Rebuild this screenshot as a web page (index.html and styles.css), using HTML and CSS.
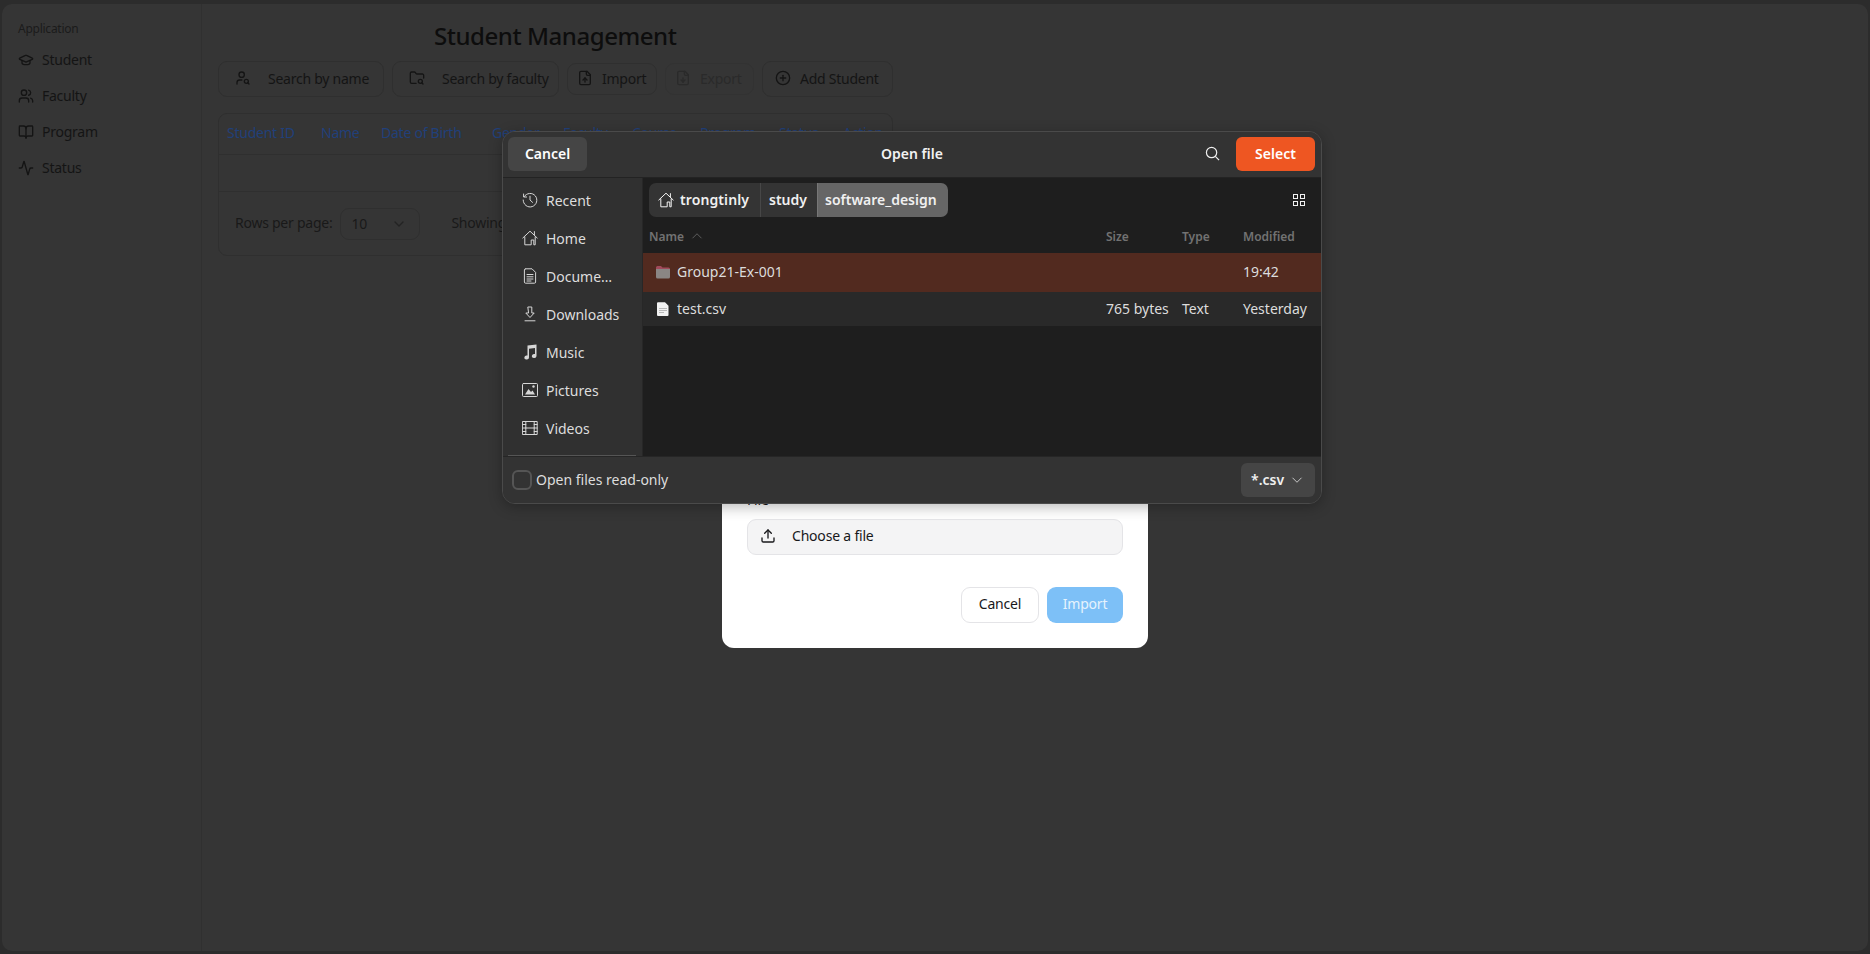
FILE: index.html
```html
<!DOCTYPE html>
<html lang="en">
<head>
<meta charset="utf-8">
<title>Student Management</title>
<link rel="stylesheet" href="styles.css">
</head>
<body>
<svg class="defs" aria-hidden="true">
  <symbol id="i-cap" viewBox="0 0 24 24"><path d="M21.42 10.922a1 1 0 0 0-.019-1.838L12.83 5.18a2 2 0 0 0-1.66 0L2.6 9.08a1 1 0 0 0 0 1.832l8.57 3.908a2 2 0 0 0 1.66 0z"/><path d="M6 12.5V16a6 3 0 0 0 12 0v-3.5"/></symbol>
  <symbol id="i-users" viewBox="0 0 24 24"><path d="M16 21v-2a4 4 0 0 0-4-4H6a4 4 0 0 0-4 4v2"/><circle cx="9" cy="7" r="4"/><path d="M22 21v-2a4 4 0 0 0-3-3.87"/><path d="M16 3.13a4 4 0 0 1 0 7.75"/></symbol>
  <symbol id="i-book" viewBox="0 0 24 24"><path d="M12 7v14"/><path d="M3 18a1 1 0 0 1-1-1V4a1 1 0 0 1 1-1h5a4 4 0 0 1 4 4 4 4 0 0 1 4-4h5a1 1 0 0 1 1 1v13a1 1 0 0 1-1 1h-6a3 3 0 0 0-3 3 3 3 0 0 0-3-3z"/></symbol>
  <symbol id="i-activity" viewBox="0 0 24 24"><path d="M22 12h-2.48a2 2 0 0 0-1.93 1.46l-2.35 8.36a.25.25 0 0 1-.48 0L9.24 2.18a.25.25 0 0 0-.48 0l-2.35 8.36A2 2 0 0 1 4.49 12H2"/></symbol>
  <symbol id="i-usearch" viewBox="0 0 24 24"><circle cx="10" cy="7" r="4"/><path d="M10.3 15H7a4 4 0 0 0-4 4v2"/><circle cx="17" cy="17" r="3"/><path d="m21 21-1.9-1.9"/></symbol>
  <symbol id="i-fsearch" viewBox="0 0 24 24"><circle cx="17" cy="17" r="3"/><path d="M10.7 20H4a2 2 0 0 1-2-2V5a2 2 0 0 1 2-2h3.9a2 2 0 0 1 1.69.9l.81 1.2a2 2 0 0 0 1.67.9H20a2 2 0 0 1 2 2v4.1"/><path d="m21 21-1.5-1.5"/></symbol>
  <symbol id="i-fileup" viewBox="0 0 24 24"><path d="M15 2H6a2 2 0 0 0-2 2v16a2 2 0 0 0 2 2h12a2 2 0 0 0 2-2V7Z"/><path d="M14 2v4a2 2 0 0 0 2 2h4"/><path d="M12 12v6"/><path d="m15 15-3-3-3 3"/></symbol>
  <symbol id="i-filedown" viewBox="0 0 24 24"><path d="M15 2H6a2 2 0 0 0-2 2v16a2 2 0 0 0 2 2h12a2 2 0 0 0 2-2V7Z"/><path d="M14 2v4a2 2 0 0 0 2 2h4"/><path d="M12 18v-6"/><path d="m9 15 3 3 3-3"/></symbol>
  <symbol id="i-plus" viewBox="0 0 24 24"><circle cx="12" cy="12" r="10"/><path d="M8 12h8"/><path d="M12 8v8"/></symbol>
  <symbol id="i-upload" viewBox="0 0 24 24"><path d="M21 15v4a2 2 0 0 1-2 2H5a2 2 0 0 1-2-2v-4"/><path d="m17 8-5-5-5 5"/><path d="M12 3v12"/></symbol>
  <symbol id="i-chev" viewBox="0 0 24 24"><path d="m6 9 6 6 6-6"/></symbol>
  <symbol id="g-recent" viewBox="0 0 16 16"><path d="M2.2 4.6A6.8 6.8 0 1 1 1.2 8"/><path d="M1.6 2v3h3"/><path d="M8 4.2V8l2.6 2.4"/></symbol>
  <symbol id="g-home" viewBox="0 0 16 16"><path d="M.8 8 8 1.2 15.2 8"/><path d="M2.8 7v7.8h6.400V10h2.600v4.800h1.400V7"/><path d="M12.400 1.600v3"/></symbol>
  <symbol id="g-doc" viewBox="0 0 16 16"><path d="M4 .8h6L13.600 4.400v9.600a1.200 1.200 0 0 1-1.200 1.200H3.600a1.200 1.200 0 0 1-1.200-1.200V2A1.200 1.200 0 0 1 3.600.8z"/><path d="M5 6.500h6M5 8.800h6M5 11h6M5 13h4"/></symbol>
  <symbol id="g-down" viewBox="0 0 16 16"><path d="M6.200 1h3.600v6h2.400L8 11.500 3.800 7h2.400z"/><path d="M3 14.800h10"/></symbol>
  <symbol id="g-grid" viewBox="0 0 16 16"><rect x="2.500" y="2.500" width="4" height="4"/><rect x="9.500" y="2.500" width="4" height="4"/><rect x="2.500" y="9.500" width="4" height="4"/><rect x="9.500" y="9.500" width="4" height="4"/></symbol>
</svg>

<div class="desktop">
  <div class="app">
    <aside class="side">
      <div class="side-label">Application</div>
      <nav class="side-nav">
        <a class="side-item"><svg class="ic"><use href="#i-cap"/></svg><span>Student</span></a>
        <a class="side-item"><svg class="ic"><use href="#i-users"/></svg><span>Faculty</span></a>
        <a class="side-item"><svg class="ic"><use href="#i-book"/></svg><span>Program</span></a>
        <a class="side-item"><svg class="ic"><use href="#i-activity"/></svg><span>Status</span></a>
      </nav>
    </aside>
    <main class="main">
      <h1 class="title">Student Management</h1>
      <div class="toolbar">
        <div class="search sname"><svg class="ic"><use href="#i-usearch"/></svg>Search by name</div>
        <div class="search sfac"><svg class="ic"><use href="#i-fsearch"/></svg>Search by faculty</div>
        <div class="tbtn bimp"><svg class="ic"><use href="#i-fileup"/></svg>Import</div>
        <div class="tbtn bexp"><svg class="ic"><use href="#i-filedown"/></svg>Export</div>
        <div class="tbtn badd"><svg class="ic"><use href="#i-plus"/></svg>Add Student</div>
      </div>
      <section class="table-card">
        <div class="thead">
          <span>Student ID</span><span>Name</span><span>Date of Birth</span><span>Gender</span><span>Faculty</span><span>Course</span><span>Program</span><span>Status</span><span>Action</span>
        </div>
        <div class="tempty"></div>
        <div class="tfoot">
          <span>Rows per page:</span>
          <div class="rows-select"><span>10</span><svg class="ic chev"><use href="#i-chev"/></svg></div>
          <span class="showing">Showing</span>
        </div>
      </section>
    </main>
  </div>
</div>

<div class="modal">
  <div class="file-label">File</div>
  <div class="file-input"><svg class="ic"><use href="#i-upload"/></svg>Choose a file</div>
  <div class="modal-actions">
    <button class="m-cancel">Cancel</button>
    <button class="m-import">Import</button>
  </div>
</div>

<div class="gtk">
  <header class="g-head">
    <button class="g-btn">Cancel</button>
    <div class="g-title">Open file</div>
    <svg class="g-search" viewBox="0 0 16 16"><circle cx="7" cy="7" r="5.500"/><path d="m11 11 4 4"/></svg>
    <button class="g-btn g-select">Select</button>
  </header>
  <div class="g-body">
    <nav class="g-side">
      <a class="g-item"><svg class="gi"><use href="#g-recent"/></svg>Recent</a>
      <a class="g-item"><svg class="gi"><use href="#g-home"/></svg>Home</a>
      <a class="g-item"><svg class="gi"><use href="#g-doc"/></svg>Docume…</a>
      <a class="g-item"><svg class="gi"><use href="#g-down"/></svg>Downloads</a>
      <a class="g-item"><svg class="gi fill" viewBox="0 0 16 16"><path d="M5.500 1.500 14.500.500V12a2.300 2 0 1 1-1.500-1.900V4L7 4.800V13.500a2.300 2 0 1 1-1.500-1.900z"/></svg>Music</a>
      <a class="g-item"><svg class="gi" viewBox="0 0 16 16"><rect x=".5" y="1.500" width="15" height="13" rx="1"/><path class="solid" d="M3 12.500 6.500 7l2.500 3 1.500-1.500 2.500 4z"/><circle class="solid" cx="11.500" cy="4.500" r="1.200"/></svg>Pictures</a>
      <a class="g-item"><svg class="gi" viewBox="0 0 16 16"><rect x=".8" y="1.500" width="14.400" height="13"/><path d="M3.800 1.500v13M12.200 1.500v13M3.800 8h8.400M.8 4.500h3M.8 8h3M.8 11.500h3M12.200 4.500h3M12.200 8h3M12.200 11.500h3"/></svg>Videos</a>
      <div class="g-side-sep"></div>
    </nav>
    <div class="g-files">
      <div class="g-pathbar">
        <div class="crumbs">
          <span class="crumb c-home"><svg class="gi"><use href="#g-home"/></svg>trongtinly</span>
          <span class="crumb c-study">study</span>
          <span class="crumb c-cur">software_design</span>
        </div>
        <svg class="g-grid"><use href="#g-grid"/></svg>
      </div>
      <div class="g-cols">
        <span class="col-name">Name<svg class="sort" viewBox="0 0 16 16"><path d="m2 11 6-6 6 6"/></svg></span>
        <span>Size</span><span>Type</span><span>Modified</span>
      </div>
      <div class="g-row selected">
        <span class="col-name"><svg class="folder" viewBox="0 0 16 16"><path class="f-tab" d="M1 3.500A1.500 1.500 0 0 1 2.500 2H6l1.500 1.500h6A1.500 1.500 0 0 1 15 5v1H1z"/><path class="f-body" d="M1 5h14v8a1.500 1.500 0 0 1-1.500 1.500h-11A1.500 1.500 0 0 1 1 13z"/></svg>Group21-Ex-001</span>
        <span></span><span></span><span>19:42</span>
      </div>
      <div class="g-row alt">
        <span class="col-name"><svg class="file" viewBox="0 0 16 16"><path class="p-paper" d="M3 1.200h7l3.500 3.500v9.300a1 1 0 0 1-1 1H3a1 1 0 0 1-1-1v-11.800a1 1 0 0 1 1-1z"/><path class="p-lines" d="M4 7.500h8M4 9.500h8M4 11.500h5"/></svg>test.csv</span>
        <span>765 bytes</span><span>Text</span><span>Yesterday</span>
      </div>
    </div>
  </div>
  <footer class="g-foot">
    <label class="g-check"><span class="box"></span>Open files read-only</label>
    <div class="g-filter"><span>*.csv</span><svg class="sort" viewBox="0 0 16 16"><path d="m2 5 6 6 6-6"/></svg></div>
  </footer>
</div>
</body>
</html>
```
FILE: styles.css
```css
* { box-sizing: border-box; }
html, body { margin: 0; padding: 0; height: 100%; }
body {
  position: relative;
  width: 1870px;
  height: 954px;
  overflow: hidden;
  background: #2c2c2c;
  font-family: "Noto Sans", "Open Sans", sans-serif;
  font-size: 14px;
  color: #141414;
}
.defs { display: none; }
button { font: inherit; border: 0; padding: 0; }
.ic, .gi {
  fill: none; stroke: currentColor; stroke-width: 2;
  stroke-linecap: round; stroke-linejoin: round;
  flex: none; width: 16px; height: 16px;
}

/* dimmed application */
.desktop { padding: 4px 2px 3px; height: 100%; }
.app {
  display: flex; height: 100%;
  background: #353535;
  border-radius: 10px;
  overflow: hidden;
  letter-spacing: -.25px;
}
.side {
  width: 200px; flex: none;
  border-right: 1px solid #303030;
  padding: 17px 16px;
}
.side-label { font-size: 12px; line-height: 16px; color: #1b1b1b; margin-bottom: 5px; }
.side-nav { display: flex; flex-direction: column; }
.side-item { display: flex; align-items: center; gap: 8px; height: 36px; font-size: 14px; }
.side-item span { margin-top: -2px; }
.main { flex: 1; padding: 0 16px; }
.title { margin: 16px 0 0 216px; font-size: 24px; line-height: 32px; font-weight: 500; color: #0d0d0d; letter-spacing: -.45px; }
.toolbar { display: flex; align-items: center; gap: 8px; margin-top: 9px; width: 680px; }
.search, .tbtn { display: flex; align-items: center; border: 1px solid #2f2f2f; border-radius: 9px; padding-bottom: 2px; }
.search { height: 36px; padding-left: 16px; gap: 17px; }
.sname { width: 166px; }
.sfac { width: 167px; margin-right: -8px; }
.tbtn { height: 32px; padding-left: 9px; gap: 9px; }
.bimp { width: 90px; margin-left: 8px; }
.bexp { width: 89px; color: #2a2a2a; border-color: #323232; }
.badd { width: 131px; height: 36px; padding-left: 12px; }
.table-card { width: 675px; height: 143px; margin-top: 16px; border: 1px solid #2f2f2f; border-radius: 9px; }
.thead { display: grid; grid-template-columns: 94px 60px 111px 71px 69px 68px 79px 64px 1fr; height: 41px; align-items: center; padding: 0 0 3px 8px; color: #21407a; border-bottom: 1px solid #2f2f2f; }
.tempty { height: 37px; border-bottom: 1px solid #2f2f2f; }
.tfoot { display: flex; align-items: center; height: 63px; padding-left: 16px; color: #191919; }
.tfoot > span { margin-top: -2px; }
.rows-select { display: flex; align-items: center; justify-content: space-between; width: 80px; height: 32px; margin-left: 8px; padding: 0 12px 0 10px; border: 1px solid #2f2f2f; border-radius: 9px; }
.chev { color: #232323; }
.tfoot .showing { margin-left: 31px; }

/* web import dialog */
.modal {
  position: absolute; left: 722px; top: 470px; width: 426px; height: 178px;
  background: #fff; border-radius: 12px;
  padding: 22px 25px 0 25px; color: #18181b;
  letter-spacing: -.2px;
}
.file-label { line-height: 16px; }
.file-input {
  display: flex; align-items: center; gap: 16px;
  height: 36px; margin-top: 11px; padding: 0 0 3px 12px;
  background: #f4f4f5; border: 1px solid #e4e4e7; border-radius: 9px;
}
.modal-actions { display: flex; justify-content: flex-end; gap: 8px; margin-top: 32px; }
.modal-actions button { width: 76px; height: 36px; padding-bottom: 3px; border-radius: 9px; font-size: 14px; letter-spacing: inherit; }
.modal-actions .m-cancel { width: 78px; background: #fff; border: 1px solid #e4e4e7; color: #18181b; }
.m-import { background: #7dc0f7; color: #e6f3fd; }

/* GTK file chooser */
.gtk {
  position: absolute; left: 502px; top: 131px; width: 820px; height: 373px;
  display: flex; flex-direction: column;
  background: #2f2f2f; color: #e8e8e8;
  border: 1px solid #4a4a4a; border-radius: 13px; overflow: hidden;
  box-shadow: 0 3px 14px rgba(0,0,0,.28);
  font-size: 14px;
}
.g-head { display: flex; align-items: center; height: 46px; padding: 0 6px 2px 5px; background: #333; border-bottom: 1px solid #232323; flex: none; }
.g-btn { width: 79px; height: 34px; padding-bottom: 1px; border-radius: 6px; background: #454545; color: #fff; font-weight: 600; }
.g-title { flex: 1; text-align: center; font-weight: 600; color: #f2f2f2; padding-left: 32px; }
.g-search { width: 15px; height: 15px; fill: none; stroke: #eee; stroke-width: 1.300; margin-right: 16px; }
.g-select { background: #ee5622; }
.g-body { display: flex; flex: 1; min-height: 0; }
.g-side { width: 140px; flex: none; position: relative; background: #303030; padding: 3px 0 0; border-right: 1px solid #272727; }
.g-item { display: flex; align-items: center; gap: 8px; height: 38px; padding-left: 19px; color: #ddd; }
.gi { stroke-width: 1; color: #d6d6d6; }
.gi.fill { fill: #d6d6d6; stroke: none; }
.gi .solid { fill: #d6d6d6; stroke: none; }
.g-side-sep { position: absolute; left: 5px; right: 6px; bottom: 0; height: 1px; background: #555; }
.g-files { flex: 1; background: #1e1e1e; min-width: 0; }
.g-pathbar { display: flex; align-items: center; justify-content: space-between; height: 34px; margin-top: 5px; padding: 0 14px 0 6px; }
.crumbs { display: flex; height: 34px; }
.crumb { display: flex; align-items: center; gap: 6px; background: #343434; color: #f0f0f0; font-weight: 600; padding: 0 9px 2px; }
.c-home { border-radius: 7px 0 0 7px; width: 112px; border-right: 1px solid #474747; letter-spacing: .1px; }
.c-home .gi { margin-top: 2px; color: #f4f4f4; }
.c-study { width: 56px; padding-left: 8px; }
.c-cur { width: 131px; background: #666; border-radius: 0 7px 7px 0; border-left: 1px solid #777; padding-left: 7px; }
.g-grid { width: 16px; height: 16px; fill: none; stroke: #f0f0f0; stroke-width: 1; }
.g-cols, .g-row { display: grid; grid-template-columns: 457px 76px 61px 1fr; align-items: center; padding-left: 6px; }
.g-cols { height: 36px; padding-top: 2px; font-size: 12px; font-weight: 600; color: #727272; }
.sort { width: 12px; height: 12px; fill: none; stroke: currentColor; stroke-width: 1; margin-left: 7px; }
.col-name { display: flex; align-items: center; }
.g-row { color: #dcdcdc; }
.g-row .col-name { padding-left: 6px; gap: 6px; }
.selected { height: 39px; padding-bottom: 2px; background: #522a1f; }
.alt { height: 34px; padding-bottom: 1px; background: #292929; }
.folder, .file { width: 16px; height: 16px; flex: none; }
.f-tab { fill: #a14a5a; }
.f-body { fill: #8a8684; }
.p-paper { fill: #f2f2f2; }
.p-lines { stroke: #aaa; stroke-width: .8; fill: none; }
.g-foot { display: flex; align-items: center; justify-content: space-between; flex: none; height: 47px; background: #333; border-top: 1px solid #262626; padding: 0 6px 0 9px; }
.g-check { display: flex; align-items: center; gap: 4px; padding-bottom: 2px; color: #ddd; }
.box { width: 20px; height: 20px; margin-top: 2px; border: 2px solid #555; border-radius: 6px; }
.g-filter { display: flex; align-items: center; gap: 7px; width: 74px; height: 34px; padding: 0 0 1px 10px; background: #454545; border-radius: 6px; color: #f0f0f0; font-weight: 600; }
.g-filter .sort { margin: 0; }
```
